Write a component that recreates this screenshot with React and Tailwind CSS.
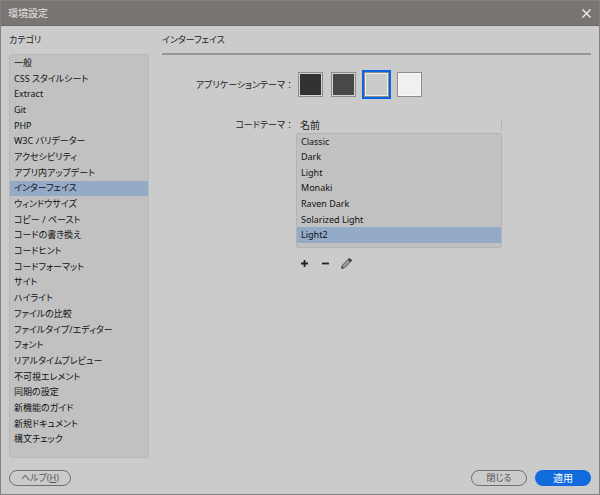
import React, { useState } from 'react'

const CATEGORIES = [
  '一般',
  'CSS スタイルシート',
  'Extract',
  'Git',
  'PHP',
  'W3C バリデーター',
  'アクセシビリティ',
  'アプリ内アップデート',
  'インターフェイス',
  'ウィンドウサイズ',
  'コピー / ペースト',
  'コードの書き換え',
  'コードヒント',
  'コードフォーマット',
  'サイト',
  'ハイライト',
  'ファイルの比較',
  'ファイルタイプ/エディター',
  'フォント',
  'リアルタイムプレビュー',
  '不可視エレメント',
  '同期の設定',
  '新機能のガイド',
  '新規ドキュメント',
  '構文チェック',
]

const APP_THEMES = [
  { id: 'darkest', label: '最も暗い', color: 'bg-[#323232] inset-ring-[#d4d4d4]' },
  { id: 'dark', label: '暗い', color: 'bg-[#484848] inset-ring-[#d4d4d4]' },
  { id: 'light', label: '明るい', color: 'bg-[#cbcbcb] inset-ring-[#ececec]' },
  { id: 'lightest', label: '最も明るい', color: 'bg-[#f0f0f0] inset-ring-[#f8f8f8]' },
]

const CODE_THEMES = ['Classic', 'Dark', 'Light', 'Monaki', 'Raven Dark', 'Solarized Light', 'Light2']

function PlusIcon() {
  return (
    <svg width="7" height="7" viewBox="0 0 7 7" fill="none" stroke="#222" strokeWidth="1.8">
      <path d="M3.5 0v7M0 3.5h7" />
    </svg>
  )
}

function MinusIcon() {
  return (
    <svg width="7" height="7" viewBox="0 0 7 7" fill="none" stroke="#222" strokeWidth="1.8">
      <path d="M0 3.5h7" />
    </svg>
  )
}

function PencilIcon() {
  return (
    <svg width="11" height="11" viewBox="0 0 12 12" fill="none" stroke="#444" strokeWidth="0.9" strokeLinejoin="round">
      <path d="M.8 11.2l.8-3.4L7.8 1.6l2.6 2.6L4.200 10.400z" fill="#9a9a9a" />
      <path d="M7.8 1.6l.9-.9q.6-.5 1.200 0l1.400 1.400q.5.600 0 1.200l-.9.900z" fill="#333" />
      <path d="M.8 11.2l.4-1.700 1.300 1.300z" fill="#333" />
    </svg>
  )
}

function CategoryList({ value, onChange }) {
  return (
    <nav className="flex w-[140px] shrink-0 flex-col">
      <h2 className="flex h-7 items-center">カテゴリ</h2>
      <ul className="flex flex-1 flex-col rounded-xs border border-[#b8b8b8] bg-[#c1c1c1] pb-[10px] text-[#111]">
        {CATEGORIES.map((name) => (
          <li key={name} className="flex flex-1">
            <button
              type="button"
              onClick={() => onChange(name)}
              className={`flex flex-1 items-center px-1 text-left whitespace-nowrap ${name === value ? 'bg-[#94abc8]' : ''}`}
            >
              {name}
            </button>
          </li>
        ))}
      </ul>
    </nav>
  )
}

function FieldLabel({ id, className, children }) {
  return (
    <span id={id} className={`flex items-center justify-end ${className}`}>
      {children}
      <span className="[font-feature-settings:normal]">：</span>
    </span>
  )
}

function ThemeSwatches({ value, onChange }) {
  return (
    <div role="radiogroup" aria-labelledby="app-theme" className="flex gap-2 pl-[2px]">
      {APP_THEMES.map((theme) => (
        <input
          key={theme.id}
          type="radio"
          name="app-theme"
          aria-label={theme.label}
          checked={theme.id === value}
          onChange={() => onChange(theme.id)}
          className={`size-[25px] appearance-none border border-[#8c8c8c] inset-ring-1 checked:ring-2 checked:ring-[#0b63e0] ${theme.color}`}
        />
      ))}
    </div>
  )
}

function CodeThemeTable({ value, onChange }) {
  return (
    <table className="block w-[206px]" aria-labelledby="code-theme">
      <thead className="block">
        <tr className="flex">
          <th className="mt-[6px] mb-[2px] flex h-3 flex-1 items-center border-r border-[#b4b4b4] pl-1 text-left text-[10px] font-normal">名前</th>
        </tr>
      </thead>
      <tbody className="grid h-[115px] auto-rows-fr rounded-xs border border-[#b4b4b4] bg-[#c1c1c1] pb-1 text-[#111]">
        {CODE_THEMES.map((name) => (
          <tr key={name} className="flex">
            <td className="flex flex-1">
              <button
                type="button"
                onClick={() => onChange(name)}
                className={`flex flex-1 items-center pl-1 text-left ${name === value ? 'bg-[#94abc8]' : ''}`}
              >
                {name}
              </button>
            </td>
          </tr>
        ))}
      </tbody>
    </table>
  )
}

export default function App() {
  const [category, setCategory] = useState('インターフェイス')
  const [appTheme, setAppTheme] = useState('light')
  const [codeTheme, setCodeTheme] = useState('Light2')

  return (
    <div className="flex h-screen flex-col border border-[#858181] bg-[#cbcbcb] font-['Noto_Sans','Noto_Sans_CJK_JP',sans-serif] text-[9px] leading-3 text-[#222] [font-feature-settings:'palt']">
      <header className="flex h-[25px] shrink-0 items-center justify-between border-b border-[#6f6a69] bg-[#7a7473] pr-2 pl-[7px] text-[#e6e4e4]">
        <h1 className="text-[10px]">環境設定</h1>
        <button type="button" aria-label="閉じる">
          <svg width="9" height="9" viewBox="0 0 9 9" fill="none" stroke="#f0f0f0" strokeWidth="1.4">
            <path d="M.5.500l8 8M8.500.500l-8 8" />
          </svg>
        </button>
      </header>

      <main className="flex min-h-0 flex-1 gap-[13px] px-2">
        <CategoryList value={category} onChange={setCategory} />
        <section className="flex-1">
          <h2 className="flex h-[29px] items-center border-b-2 border-[#969696]">インターフェイス</h2>
          <div className="mt-[17px] grid grid-cols-[132px_1fr] gap-x-[2px] gap-y-4">
            <FieldLabel id="app-theme" className="h-[25px]">アプリケーションテーマ</FieldLabel>
            <ThemeSwatches value={appTheme} onChange={setAppTheme} />
            <FieldLabel id="code-theme" className="mt-[6px] h-3">コードテーマ</FieldLabel>
            <div>
              <CodeThemeTable value={codeTheme} onChange={setCodeTheme} />
              <div className="mt-[7px] flex gap-1">
                <button type="button" aria-label="追加" className="flex size-[17px] items-center justify-center"><PlusIcon /></button>
                <button type="button" aria-label="削除" className="flex size-[17px] items-center justify-center"><MinusIcon /></button>
                <button type="button" aria-label="編集" className="flex size-[17px] items-center justify-center"><PencilIcon /></button>
              </div>
            </div>
          </div>
        </section>
      </main>

      <footer className="flex shrink-0 items-center gap-2 px-2 pt-3 pb-2">
        <button type="button" className="mr-auto flex h-4 w-[62px] items-center justify-center rounded-full border border-[#707070] text-[#555]">
          ヘルプ(<u>H</u>)
        </button>
        <button type="button" className="flex h-4 w-14 items-center justify-center rounded-full border border-[#707070] text-[#555]">閉じる</button>
        <button type="button" className="flex h-4 w-14 items-center justify-center rounded-full bg-[#116bdc] text-[10px] text-white">適用</button>
      </footer>
    </div>
  )
}
